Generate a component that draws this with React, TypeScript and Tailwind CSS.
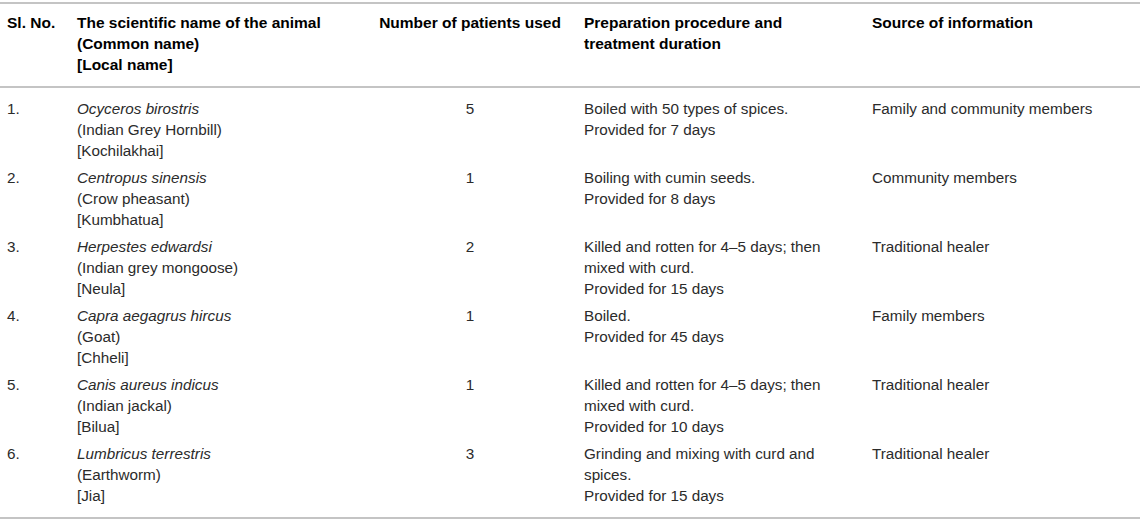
import React from 'react';

interface Row {
  no: string;
  sci: string;
  common: string;
  local: string;
  patients: string;
  prep: string[];
  source: string;
}

const rows: Row[] = [
  {
    no: '1.',
    sci: 'Ocyceros birostris',
    common: '(Indian Grey Hornbill)',
    local: '[Kochilakhai]',
    patients: '5',
    prep: ['Boiled with 50 types of spices.', 'Provided for 7 days'],
    source: 'Family and community members',
  },
  {
    no: '2.',
    sci: 'Centropus sinensis',
    common: '(Crow pheasant)',
    local: '[Kumbhatua]',
    patients: '1',
    prep: ['Boiling with cumin seeds.', 'Provided for 8 days'],
    source: 'Community members',
  },
  {
    no: '3.',
    sci: 'Herpestes edwardsi',
    common: '(Indian grey mongoose)',
    local: '[Neula]',
    patients: '2',
    prep: ['Killed and rotten for 4–5 days; then', 'mixed with curd.', 'Provided for 15 days'],
    source: 'Traditional healer',
  },
  {
    no: '4.',
    sci: 'Capra aegagrus hircus',
    common: '(Goat)',
    local: '[Chheli]',
    patients: '1',
    prep: ['Boiled.', 'Provided for 45 days'],
    source: 'Family members',
  },
  {
    no: '5.',
    sci: 'Canis aureus indicus',
    common: '(Indian jackal)',
    local: '[Bilua]',
    patients: '1',
    prep: ['Killed and rotten for 4–5 days; then', 'mixed with curd.', 'Provided for 10 days'],
    source: 'Traditional healer',
  },
  {
    no: '6.',
    sci: 'Lumbricus terrestris',
    common: '(Earthworm)',
    local: '[Jia]',
    patients: '3',
    prep: ['Grinding and mixing with curd and', 'spices.', 'Provided for 15 days'],
    source: 'Traditional healer',
  },
];

// column template shared by header and body rows
const cols = 'grid grid-cols-[70px_291px_216px_288px_1fr]';

export default function App() {
  return (
    <div
      className="w-[1143px] h-[521px] bg-white text-[15.25px] leading-[21px]"
      style={{ fontFamily: '"Liberation Sans", Arial, sans-serif' }}
    >
      <div className="mt-[2px] w-[1140px] border-t-2 border-b-2 border-[#c4c4c4]">
        {/* Header */}
        <div className={`${cols} pl-[7px] pt-[8px] pb-[11px] border-b-2 border-[#c4c4c4] font-bold text-[15.5px] text-black`}>
          <div>Sl. No.</div>
          <div>
            The scientific name of the animal
            <br />
            (Common name)
            <br />
            [Local name]
          </div>
          <div className="text-center pr-[12px]">Number of patients used</div>
          <div>
            Preparation procedure and
            <br />
            treatment duration
          </div>
          <div>Source of information</div>
        </div>

        {/* Body */}
        <div className="pt-[7px] pb-[8px] text-[#2b2b2b]">
          {rows.map((r) => (
            <div key={r.no} className={`${cols} pl-[7px] py-[3px]`}>
              <div>{r.no}</div>
              <div>
                <div className="italic">{r.sci}</div>
                <div>{r.common}</div>
                <div>{r.local}</div>
              </div>
              <div className="text-center pr-[12px]">{r.patients}</div>
              <div>
                {r.prep.map((p, i) => (
                  <div key={i}>{p}</div>
                ))}
              </div>
              <div>{r.source}</div>
            </div>
          ))}
        </div>
      </div>
    </div>
  );
}
